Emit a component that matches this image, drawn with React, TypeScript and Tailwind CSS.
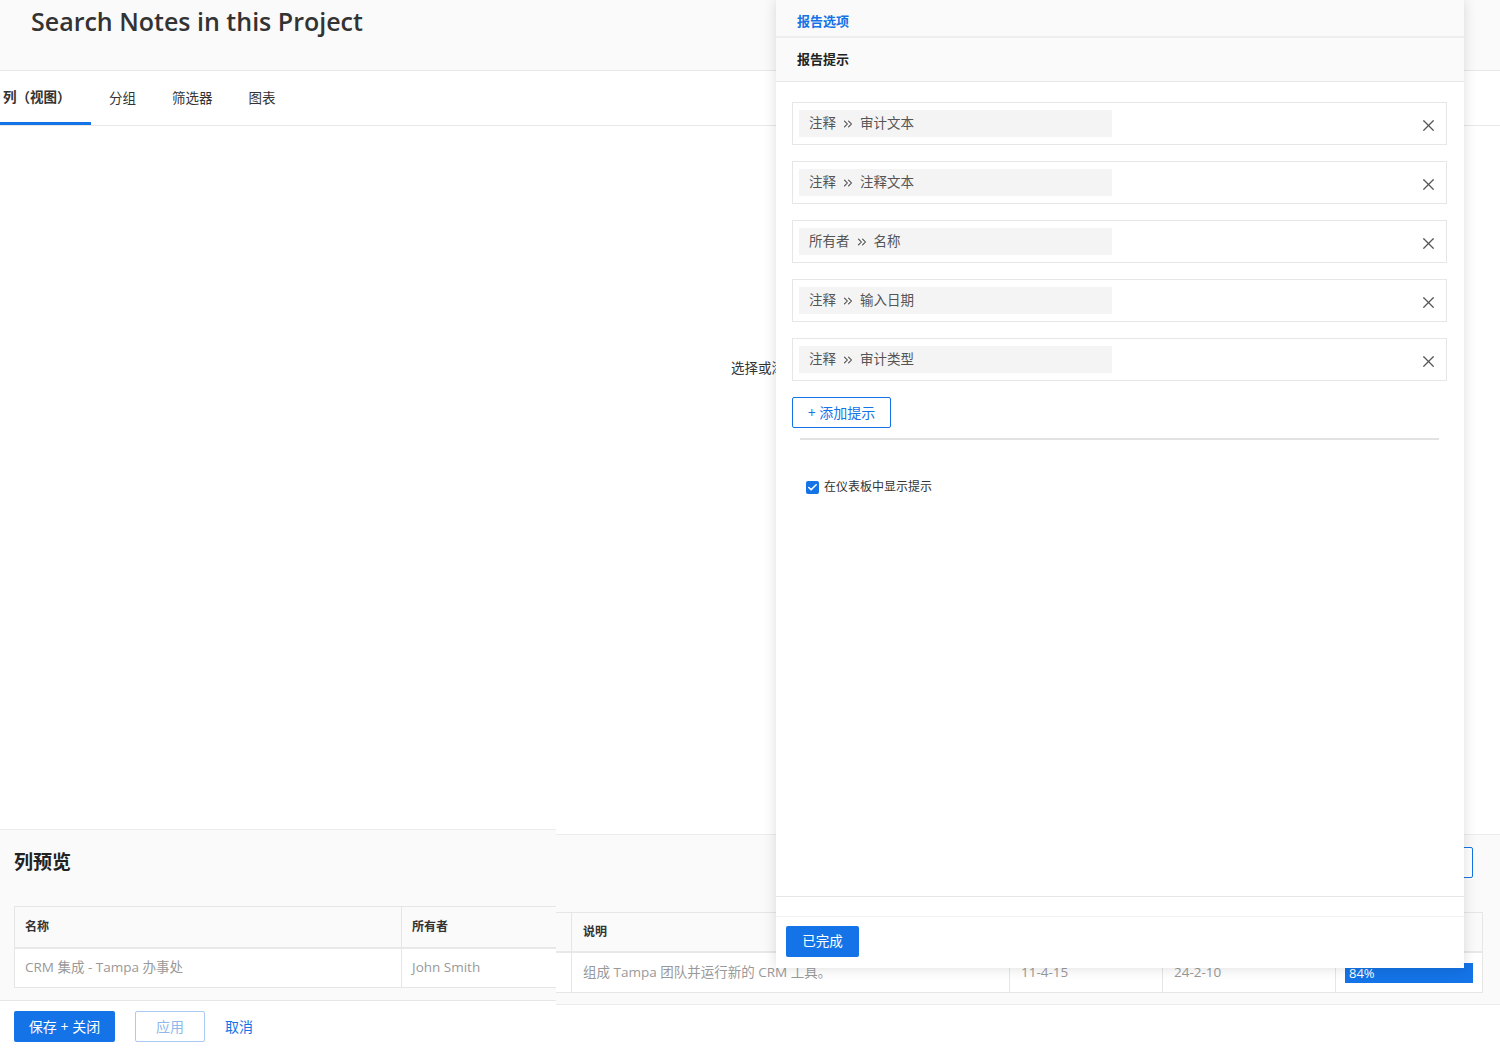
import { X, Check, ChevronsRight } from 'lucide-react'

const HINTS = [
  { group: '注释', field: '审计文本' },
  { group: '注释', field: '注释文本' },
  { group: '所有者', field: '名称' },
  { group: '注释', field: '输入日期' },
  { group: '注释', field: '审计类型' },
]

const TABS = ['列（视图）', '分组', '筛选器', '图表']

const FONT = "font-['Open_Sans','Noto_Sans_CJK_SC',sans-serif]"

function HintRow({ group, field }: { group: string; field: string }) {
  return (
    <div className="h-[43px] border border-[#e6e6e6] flex items-center pl-[6px] pr-[8px]">
      <div className="w-[313px] h-[27px] bg-[#f4f4f4] flex items-center pl-[10px] text-[13.5px] text-[#555]">
        <span>{group}</span>
        <ChevronsRight size={14} strokeWidth={1.8} className="mx-[5px] text-[#444]" />
        <span>{field}</span>
      </div>
      <div className="flex-1" />
      <X size={19} strokeWidth={1.5} className="text-[#555] mt-[4px]" />
    </div>
  )
}

function ReportPanel() {
  return (
    <div className="absolute left-[776px] top-0 w-[688px] h-[968px] bg-white shadow-[0_0_12px_rgba(0,0,0,0.14)] flex flex-col">
      <div className="h-[38px] bg-[#fafafa] border-b-2 border-[#eeeeee] flex items-center pt-[8px] pl-[21px] text-[13px] font-semibold text-[#1473e6]">
        报告选项
      </div>
      <div className="h-[44px] bg-[#fafafa] border-b border-[#e6e6e6] flex items-center pl-[21px] text-[13px] font-bold text-[#222]">
        报告提示
      </div>
      <div className="flex-1 pt-[20px] pl-[16px] pr-[17px]">
        <div className="flex flex-col gap-[16px]">
          {HINTS.map((h, i) => (
            <HintRow key={i} group={h.group} field={h.field} />
          ))}
        </div>
        <button className="mt-[16px] h-[31px] w-[99px] border border-[#1473e6] rounded-[2px] text-[14px] text-[#1473e6] flex items-center justify-center">
          + 添加提示
        </button>
        <div className="mt-[10px] mx-[8px] h-[2px] bg-[#e2e2e2]" />
        <label className="mt-[38px] ml-[14px] flex items-center gap-[5px] text-[12px] text-[#333]">
          <span className="w-[13px] h-[13px] rounded-[2px] bg-[#1473e6] flex items-center justify-center">
            <Check size={11} strokeWidth={3.5} className="text-white" />
          </span>
          在仪表板中显示提示
        </label>
      </div>
      <div className="h-[72px] border-t border-[#e6e6e6] flex flex-col">
        <div className="h-[20px] border-b border-[#f2f2f2]" />
        <div className="pl-[10px] pt-[9px]">
          <button className="h-[31px] w-[73px] rounded-[2px] bg-[#1473e6] text-white text-[13.5px]">已完成</button>
        </div>
      </div>
    </div>
  )
}

export default function App() {
  return (
    <div className={`relative w-[1500px] h-[1048px] overflow-hidden bg-white ${FONT}`}>
      {/* header */}
      <div className="h-[71px] bg-[#fafafa] border-b border-[#e8e8e8] pl-[31px] pt-[3px]">
        <h1 className="text-[25px] font-semibold text-[#333]">Search Notes in this Project</h1>
      </div>

      {/* tabs */}
      <div className="h-[55px] border-b border-[#e8e8e8] flex items-stretch text-[13.5px] text-[#333]">
        <div className="w-[91px] border-b-[3px] border-[#1473e6] flex items-center pl-[3px] pt-[2px] font-semibold">
          {TABS[0]}
        </div>
        <div className="flex items-center pl-[18px] gap-[36px]">
          {TABS.slice(1).map((t) => (
            <span key={t}>{t}</span>
          ))}
        </div>
      </div>

      {/* canvas */}
      <div className="h-[703px] pl-[731px] pt-[232px] text-[13.5px] text-[#333]">
        选择或添加列
      </div>

      {/* preview + footer */}
      <div className="flex items-start">
        <div className="w-[556px] shrink-0">
          <div className="h-[171px] bg-[#fafafa] border-t border-[#ececec] pt-[18px] pl-[14px]">
            <div className="text-[19px] font-bold text-[#222]">列预览</div>
            <div className="mt-[29px] border border-r-0 border-[#e6e6e6] bg-white">
              <div className="flex h-[42px] bg-[#fafafa] border-b-2 border-[#e8e8e8] text-[12px] font-bold text-[#333]">
                <div className="w-[387px] border-r border-[#e6e6e6] flex items-center pl-[10px]">名称</div>
                <div className="flex-1 flex items-center pl-[10px]">所有者</div>
              </div>
              <div className="flex h-[38px] text-[13.5px] text-[#999]">
                <div className="w-[387px] border-r border-[#e6e6e6] flex items-center pl-[10px]">CRM 集成 - Tampa 办事处</div>
                <div className="flex-1 flex items-center pl-[10px]">John Smith</div>
              </div>
            </div>
          </div>
          <div className="h-[48px] border-t border-[#e6e6e6] flex items-center pt-[4px] pl-[14px] gap-[20px] text-[14px]">
            <button className="h-[31px] w-[101px] rounded-[2px] bg-[#1473e6] text-white">保存 + 关闭</button>
            <button className="h-[31px] w-[70px] rounded-[2px] border border-[#a9cbf3] text-[#8fb8ee]">应用</button>
            <button className="text-[#1473e6]">取消</button>
          </div>
        </div>

        <div className="flex-1 mt-[5px] h-[171px] bg-[#fafafa] border-t border-b border-[#ececec] pt-[12px] pr-[17px]">
          <div className="flex justify-end pr-[10px]">
            <div className="h-[31px] w-[40px] border border-[#1473e6] rounded-[2px] bg-white" />
          </div>
          <div className="mt-[34px] border border-l-0 border-[#e6e6e6] bg-white text-[13.5px]">
            <div className="flex h-[40px] bg-[#fafafa] border-b-2 border-[#e8e8e8] text-[12px] font-bold text-[#333]">
              <div className="w-[16px] border-r border-[#e6e6e6]" />
              <div className="w-[438px] border-r border-[#e6e6e6] flex items-center pl-[11px]">说明</div>
              <div className="w-[153px] border-r border-[#e6e6e6]" />
              <div className="w-[173px] border-r border-[#e6e6e6]" />
              <div className="flex-1" />
            </div>
            <div className="flex h-[39px] text-[#999]">
              <div className="w-[16px] border-r border-[#e6e6e6]" />
              <div className="w-[438px] border-r border-[#e6e6e6] flex items-center pl-[11px]">组成 Tampa 团队并运行新的 CRM 工具。</div>
              <div className="w-[153px] border-r border-[#e6e6e6] flex items-center pl-[11px]">11-4-15</div>
              <div className="w-[173px] border-r border-[#e6e6e6] flex items-center pl-[11px]">24-2-10</div>
              <div className="flex-1 flex items-center pl-[9px] pr-[9px]">
                <div className="h-[20px] w-full bg-[#1473e6] text-white text-[13px] leading-[20px] pl-[4px]">84%</div>
              </div>
            </div>
          </div>
        </div>
      </div>

      <ReportPanel />
    </div>
  )
}
